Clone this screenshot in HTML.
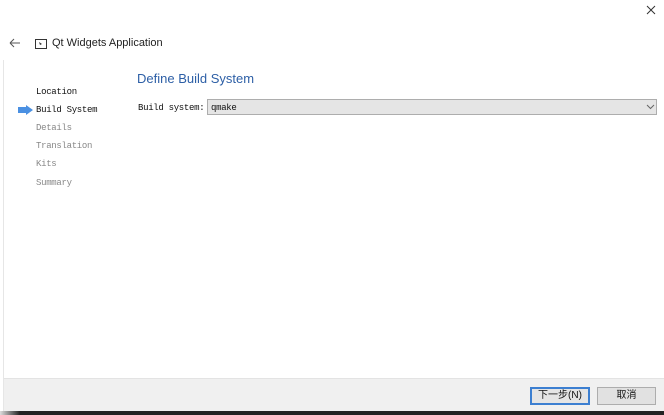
<!DOCTYPE html>
<html><head><meta charset="utf-8"><style>
body{margin:0;width:664px;height:415px;background:#fff;position:relative;overflow:hidden;font-family:"Liberation Sans","Noto Sans CJK SC",sans-serif}
.a{position:absolute}
.mono{font-family:"Liberation Mono","Noto Sans CJK SC",monospace;font-size:9px;letter-spacing:-0.3px}
.nav{left:36px;color:#888}
</style></head><body>
<div class="a" style="left:3px;top:60px;width:1px;height:352px;background:#e6e6e6"></div>
<svg class="a" style="left:644px;top:3px" width="14" height="14"><path d="M3 3L11 11M11 3L3 11" stroke="#333" stroke-width="1"/></svg>
<svg class="a" style="left:9px;top:38px" width="12" height="10"><path d="M1 5H11M1 5L5 1M1 5L5 9" stroke="#555" fill="none" stroke-width="1"/></svg>
<svg class="a" style="left:35px;top:39px" width="12" height="10"><rect x="0.5" y="0.5" width="11" height="9" fill="none" stroke="#333"/><path d="M4 3L7 5L5 6Z" fill="#333"/></svg>
<div class="a" style="left:52px;top:37px;font-size:11px;color:#222">Qt Widgets Application</div>
<div class="a" style="left:137px;top:71px;font-size:13px;color:#2d5fa6">Define Build System</div>
<div class="a mono" style="left:36px;top:87px;color:#111">Location</div>
<svg class="a" style="left:18px;top:105px" width="15" height="10"><path d="M0 2H8V0L15 5L8 10V8H0Z" fill="#4a90e2"/></svg>
<div class="a mono" style="left:36px;top:105px;color:#111">Build System</div>
<div class="a mono nav" style="top:123px">Details</div>
<div class="a mono nav" style="top:141px">Translation</div>
<div class="a mono nav" style="top:159px">Kits</div>
<div class="a mono nav" style="top:178px">Summary</div>
<div class="a mono" style="left:138px;top:103px;color:#111">Build system:</div>
<div class="a" style="left:207px;top:99px;width:450px;height:16px;background:#e5e5e5;border:1px solid #adadad;box-sizing:border-box"></div>
<div class="a mono" style="left:211px;top:103px;color:#111">qmake</div>
<svg class="a" style="left:646px;top:104px" width="9" height="6"><path d="M1 1L4.5 4.5L8 1" stroke="#666" fill="none"/></svg>
<div class="a" style="left:4px;top:378px;width:660px;height:34px;background:#f0f0f0;border-top:1px solid #e3e3e3"></div>
<div class="a" style="left:530px;top:387px;width:60px;height:18px;box-sizing:border-box;border:2px solid #3c7fd1;background:#e5e5e5;font-size:10px;text-align:center;line-height:14px;color:#111">下一步(N)</div>
<div class="a" style="left:597px;top:387px;width:59px;height:18px;box-sizing:border-box;border:1px solid #adadad;background:#e1e1e1;font-size:10px;text-align:center;line-height:16px;color:#111">取消</div>
<div class="a" style="left:0;top:411px;width:664px;height:4px;background:linear-gradient(90deg,#ddd,#222 3%,#222)"></div>
</body></html>
